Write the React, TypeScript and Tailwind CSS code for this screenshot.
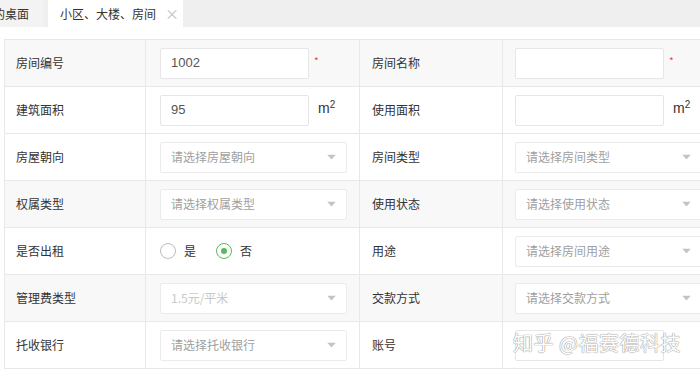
import React from "react";

type Field =
  | { kind: "input"; value?: string; required?: boolean; unit?: boolean }
  | { kind: "select"; placeholder: string; disabled?: boolean }
  | { kind: "radio" };

interface Row {
  label: string;
  field: Field;
  label2: string;
  field2: Field;
  gray?: boolean;
}

const rows: Row[] = [
  {
    label: "房间编号",
    field: { kind: "input", value: "1002", required: true },
    label2: "房间名称",
    field2: { kind: "input", required: true },
    gray: true,
  },
  {
    label: "建筑面积",
    field: { kind: "input", value: "95", unit: true },
    label2: "使用面积",
    field2: { kind: "input", unit: true },
  },
  {
    label: "房屋朝向",
    field: { kind: "select", placeholder: "请选择房屋朝向" },
    label2: "房间类型",
    field2: { kind: "select", placeholder: "请选择房间类型" },
  },
  {
    label: "权属类型",
    field: { kind: "select", placeholder: "请选择权属类型" },
    label2: "使用状态",
    field2: { kind: "select", placeholder: "请选择使用状态" },
    gray: true,
  },
  {
    label: "是否出租",
    field: { kind: "radio" },
    label2: "用途",
    field2: { kind: "select", placeholder: "请选择房间用途" },
  },
  {
    label: "管理费类型",
    field: { kind: "select", placeholder: "1.5元/平米", disabled: true },
    label2: "交款方式",
    field2: { kind: "select", placeholder: "请选择交款方式" },
    gray: true,
  },
  {
    label: "托收银行",
    field: { kind: "select", placeholder: "请选择托收银行" },
    label2: "账号",
    field2: { kind: "input" },
  },
];

function Caret() {
  return (
    <svg width="9" height="5" viewBox="0 0 9 5" className="absolute right-[10px] top-1/2 -translate-y-1/2">
      <path d="M0 0h9L4.5 5z" fill="#c4c4c4" />
    </svg>
  );
}

function FieldView({ field }: { field: Field }) {
  if (field.kind === "input") {
    return (
      <div className="flex items-center">
        <div className="w-[149px] h-[31px] bg-white border border-[#e6e6e6] rounded-[2px] flex items-center px-[10px] text-[13px] text-[#555] font-['Liberation_Sans']">
          {field.value}
        </div>
        {field.required && <span className="ml-[5px] -mt-[6px] text-[10px] text-[#e04b4b]">*</span>}
        {field.unit && (
          <span className="ml-[9px] -mt-[4px] text-[14px] text-[#333] font-['Liberation_Sans']">
            m<sup className="text-[10px]">2</sup>
          </span>
        )}
      </div>
    );
  }
  if (field.kind === "select") {
    return (
      <div className="relative w-[187px] h-[31px] bg-white border border-[#ebebeb] rounded-[2px] flex items-center px-[10px] text-[12px]">
        <span className={field.disabled ? "text-[#c8c8c8]" : "text-[#a0a0a0]"}>{field.placeholder}</span>
        <Caret />
      </div>
    );
  }
  return (
    <div className="flex items-center text-[12px] text-[#333]">
      <span className="w-[16px] h-[16px] rounded-full border border-[#bdbdbd] bg-white" />
      <span className="ml-[8px]">是</span>
      <span className="ml-[20px] w-[16px] h-[16px] rounded-full border border-[#5cb85c] bg-white flex items-center justify-center">
        <span className="w-[6px] h-[6px] rounded-full bg-[#5cb85c]" />
      </span>
      <span className="ml-[8px]">否</span>
    </div>
  );
}

export default function App() {
  return (
    <div className="relative w-[700px] h-[369px] overflow-hidden bg-white font-['Noto_Sans_CJK_SC',sans-serif]">
      <div className="h-[27px] bg-[#efefef] flex text-[12px] text-[#333]">
        <div className="w-[43px] bg-[#f3f3f3] flex items-center overflow-hidden">
          <span className="-ml-[19px] whitespace-nowrap">我的桌面</span>
        </div>
        <div className="ml-[5px] w-[135px] bg-white flex items-center pl-[12px] whitespace-nowrap">
          <span>小区、大楼、房间</span>
          <span className="ml-[9px] text-[#c2c2c2] text-[14px]">×</span>
        </div>
      </div>

      <div className="mt-[12px] ml-[4px] w-[720px] border-l border-t border-[#e8e8e8]">
        {rows.map((r) => (
          <div
            key={r.label}
            className={`grid grid-cols-[141px_214px_143px_212px] h-[47px] ${r.gray ? "bg-[#f8f8f8]" : "bg-white"}`}
          >
            <div className="border-r border-b border-[#e8e8e8] flex items-center pl-[11px] text-[12px] text-[#333]">
              {r.label}
            </div>
            <div className="border-r border-b border-[#e8e8e8] flex items-center pl-[14px]">
              <FieldView field={r.field} />
            </div>
            <div className="border-r border-b border-[#e8e8e8] flex items-center pl-[12px] text-[12px] text-[#333]">
              {r.label2}
            </div>
            <div className="border-r border-b border-[#e8e8e8] flex items-center pl-[12px]">
              <FieldView field={r.field2} />
            </div>
          </div>
        ))}
      </div>

      <div className="absolute left-[513px] top-[328px] text-[20px] tracking-[0.5px] text-white [text-shadow:0_0_1px_#888,0_0_1px_#888] whitespace-nowrap">
        知乎 @福赛德科技
      </div>
    </div>
  );
}
